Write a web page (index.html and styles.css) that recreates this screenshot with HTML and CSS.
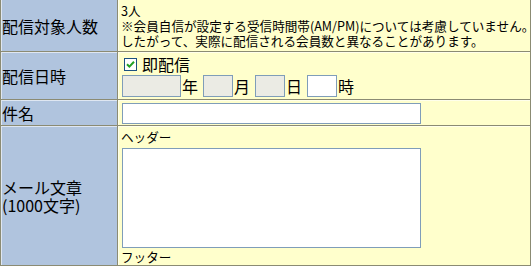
FILE: index.html
```html
<!DOCTYPE html>
<html lang="ja">
<head>
    <meta charset="UTF-8">
    <title>メール配信</title>
    <link rel="stylesheet" href="styles.css">
</head>
<body>
    <table class="form-table">
        <tr>
            <th>配信対象人数</th>
            <td class="note">3人<br>※会員自信が設定する受信時間帯(AM/PM)については考慮していません。<br>したがって、実際に配信される会員数と異なることがあります。</td>
        </tr>
        <tr>
            <th>配信日時</th>
            <td class="date-cell">
                <label class="now">
                    <span class="check">
                        <svg width="9" height="9" viewBox="0 0 9 9"><path d="M1 4.2 L3.4 6.6 L8 1.8" fill="none" stroke="#21a121" stroke-width="2"/></svg>
                    </span>即配信
                </label>
                <div class="date-row">
                    <input class="yy" type="text" disabled><span class="unit">年</span>
                    <input class="mm" type="text" disabled><span class="unit">月</span>
                    <input class="mm" type="text" disabled><span class="unit">日</span>
                    <input class="mm hh" type="text"><span class="unit">時</span>
                </div>
            </td>
        </tr>
        <tr>
            <th>件名</th>
            <td class="subject-cell"><input class="subject" type="text"></td>
        </tr>
        <tr>
            <th>メール文章<br>(1000文字)</th>
            <td class="note body-cell">ヘッダー<textarea class="body"></textarea>フッター</td>
        </tr>
    </table>
</body>
</html>
```

FILE: styles.css
```css
body {
    margin: 0;
    font-family: "Noto Sans CJK JP", sans-serif;
    color: #000;
    overflow: hidden;
}
.form-table {
    width: 100%;
    margin-top: -2px;
    table-layout: fixed;
    border-collapse: separate;
    border-spacing: 1px;
    background-color: #8b8b73;
}
.form-table th,
.form-table td {
    border-top: 1px solid rgba(255,255,255,0.6);
    border-left: 1px solid rgba(255,255,255,0.6);
}
.form-table th {
    width: 115px;
    padding: 0;
    background-color: #b0c4de;
    font-size: 16px;
    line-height: 18px;
    font-weight: normal;
    text-align: left;
    vertical-align: middle;
    white-space: nowrap;
}
.form-table td {
    background-color: #ffffcc;
    padding: 2px;
    vertical-align: top;
}
.note {
    font-size: 12.6px;
    line-height: 15px;
    white-space: nowrap;
}
.form-table td.note {
    padding: 3px 2px;
}
.now {
    display: flex;
    align-items: center;
    height: 18px;
    font-size: 16px;
    line-height: 18px;
}
.check {
    display: flex;
    align-items: center;
    justify-content: center;
    box-sizing: border-box;
    width: 13px;
    height: 13px;
    margin: 0 5px 0 3px;
    border: 1px solid #1c5180;
    background-color: #fff;
}
.date-row {
    display: flex;
    align-items: center;
    margin-top: 2px;
    font-size: 16px;
}
input,
textarea {
    box-sizing: border-box;
    margin: 0;
    padding: 1px 2px;
    border: 1px solid #7f9db9;
    background-color: #fff;
    font-family: inherit;
    font-size: 12px;
    outline: none;
}
input:disabled {
    background-color: #ebebe4;
}
.yy {
    width: 59px;
    height: 22px;
    margin-left: 1px;
}
.mm {
    width: 30px;
    height: 22px;
}
.unit {
    margin-left: 1px;
    margin-right: 5px;
    line-height: 21px;
}
.form-table td.subject-cell {
    padding: 2px 2px 1px;
}
.subject {
    display: block;
    width: 299px;
    height: 21px;
    margin-left: 1px;
}
.form-table td.body-cell {
    padding: 2px 2px 1px;
}
.body {
    display: block;
    width: 299px;
    height: 100px;
    margin: 4px 0 1px 1px;
    resize: none;
}
```
